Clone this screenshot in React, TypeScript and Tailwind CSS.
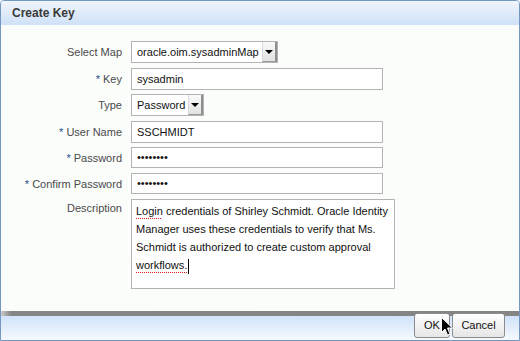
import React from 'react';

const font = "font-['Liberation_Sans',Arial,sans-serif]";

const Label = ({ text, required }: { text: string; required?: boolean }) => (
  <div className="w-[121px] shrink-0 text-right text-[11px] text-[#4a4a4a] leading-[14px]">
    {required && <span className="text-[#23508c] mr-[3px]">*</span>}
    {text}
  </div>
);

const TextBox = ({ value, h = 22 }: { value: string; h?: number }) => (
  <div
    className={`w-[252px] ${h === 22 ? 'h-[22px]' : 'h-[21px]'} border border-[#b3b3b3] bg-white pl-[5px] flex items-center text-[11px] text-[#111]`}
  >
    {value}
  </div>
);

const Arrow = () => (
  <div className="w-[15px] h-full flex items-center justify-center bg-gradient-to-b from-[#fafafa] to-[#e2e2e2] border-l border-l-[#d8d8d8] border-r-2 border-r-[#8f8f8f] border-b border-b-[#9a9a9a]">
    <div className="w-0 h-0 border-l-[4px] border-r-[4px] border-t-[4px] border-l-transparent border-r-transparent border-t-black" />
  </div>
);

const Select = ({ value, w }: { value: string; w: string }) => (
  <div className={`${w} h-[22px] border border-[#b3b3b3] bg-white flex items-stretch text-[11px] text-[#111]`}>
    <div className="flex-1 pl-[5px] pr-[3px] flex items-center whitespace-nowrap">{value}</div>
    <Arrow />
  </div>
);

const Row = ({ children, className = '' }: { children: React.ReactNode; className?: string }) => (
  <div className={`flex items-center gap-[9px] ${className}`}>{children}</div>
);

export default function App() {
  return (
    <div className={`w-[520px] h-[341px] bg-white ${font}`}>
      <div className="relative flex flex-col h-full border border-[#7397be] rounded-t-[4px] overflow-hidden">
        {/* header */}
        <div className="h-[24px] shrink-0 bg-gradient-to-b from-[#f0f5fc] to-[#cfe1f7] flex items-center pl-[11px]">
          <span className="text-[12px] font-bold text-[#3a3a3a]">Create Key</span>
        </div>

        {/* body */}
        <div className="flex-1 bg-[#fbfdfb] pt-[16px]">
          <Row>
            <Label text="Select Map" />
            <Select value="oracle.oim.sysadminMap" w="w-[147px]" />
          </Row>
          <Row className="mt-[5px]">
            <Label text="Key" required />
            <TextBox value="sysadmin" />
          </Row>
          <Row className="mt-[4px]">
            <Label text="Type" />
            <Select value="Password" w="w-[73px]" />
          </Row>
          <Row className="mt-[5px]">
            <Label text="User Name" required />
            <TextBox value="SSCHMIDT" />
          </Row>
          <Row className="mt-[4px]">
            <Label text="Password" required />
            <TextBox value="••••••••" h={21} />
          </Row>
          <Row className="mt-[5px]">
            <Label text="Confirm Password" required />
            <TextBox value="••••••••" h={21} />
          </Row>
          <div className="flex items-start gap-[9px] mt-[5px]">
            <div className="pt-[2px]">
              <Label text="Description" />
            </div>
            <div className="w-[264px] h-[90px] border border-[#b3b3b3] bg-white pl-[4px] pt-[2px] text-[11px] leading-[18px] text-[#111] whitespace-nowrap">
              <span className="underline decoration-dotted decoration-[#e02020] underline-offset-[3px]">Login</span> credentials of Shirley Schmidt. Oracle Identity
              <br />
              Manager uses these credentials to verify that Ms.
              <br />
              Schmidt is authorized to create custom approval
              <br />
              <span className="underline decoration-dotted decoration-[#e02020] underline-offset-[3px]">workflows.</span>
              <span className="inline-block w-px h-[15px] bg-black align-middle ml-px" />
            </div>
          </div>
        </div>

        {/* separator bar */}
        <div className="h-[5px] shrink-0 bg-gradient-to-r from-[#c9c9c9] via-[#868686] via-[2%] to-[#858585]" />

        {/* footer */}
        <div className="h-[24px] shrink-0 bg-gradient-to-b from-[#d0e3f9] to-[#f5f9fe] flex justify-end pr-[14px]">
          <div className="flex gap-[2px] -mt-[3px] h-[25px] relative z-10">
            <button className="w-[36px] h-full border border-[#8c8c8c] rounded-[3px] bg-gradient-to-b from-white to-[#e6e6e6] text-[11px] text-[#111]">
              OK
            </button>
            <button className="w-[53px] h-full border border-[#8c8c8c] rounded-[3px] bg-gradient-to-b from-white to-[#e6e6e6] text-[11px] text-[#111]">
              Cancel
            </button>
          </div>
        </div>

        {/* mouse pointer */}
        <svg className="absolute left-[440px] top-[316px] z-20" width="13" height="19" viewBox="0 0 13 19">
          <path d="M0.5 0.5 L0.5 15.5 L4 12 L6.5 18 L9 17 L6.5 11 L11.5 11 Z" fill="#000" stroke="#fff" strokeWidth="1" />
        </svg>
      </div>
    </div>
  );
}
